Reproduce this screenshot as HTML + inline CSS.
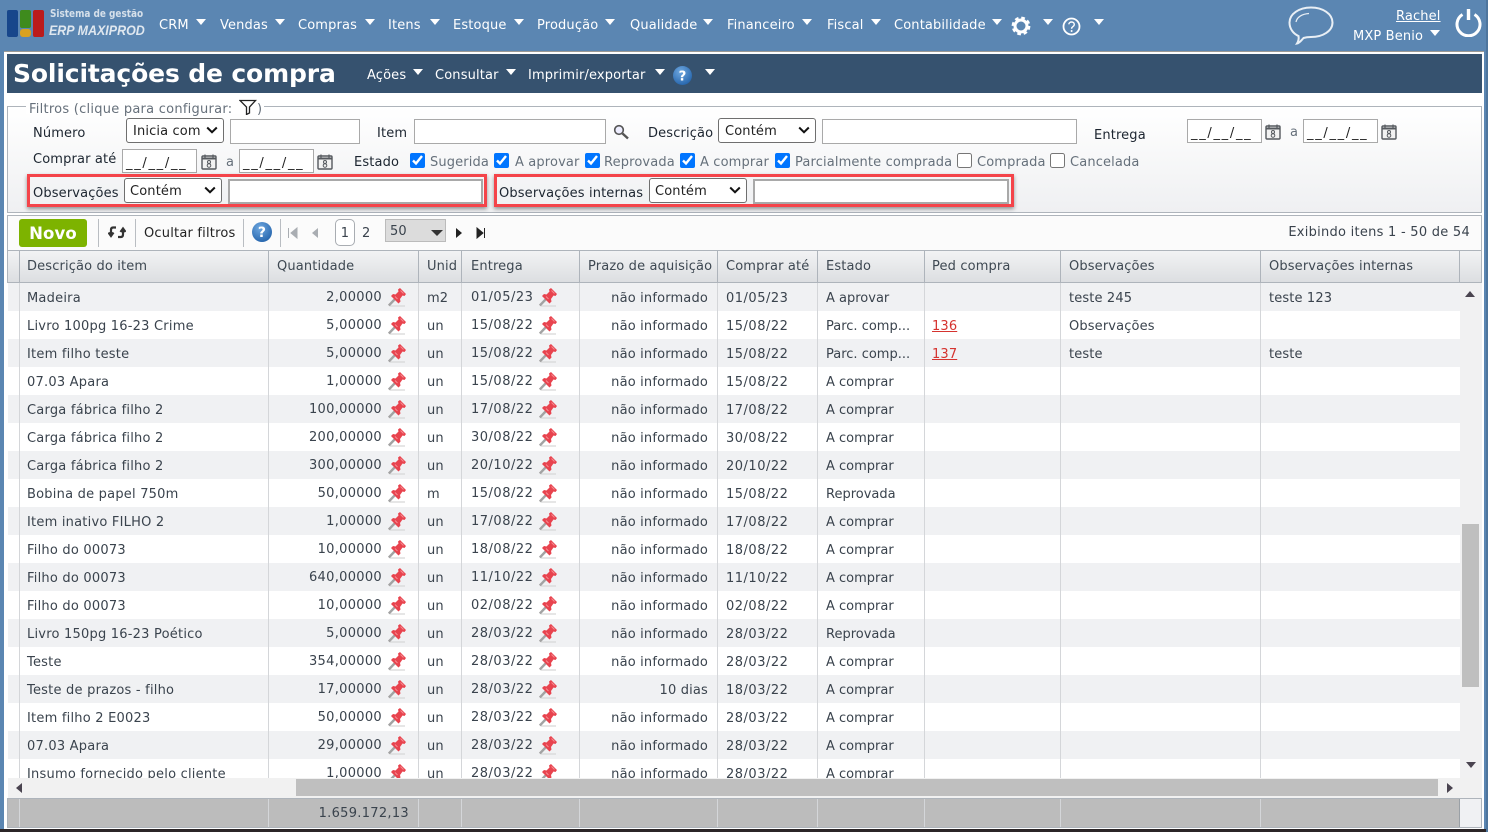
<!DOCTYPE html>
<html lang="pt"><head><meta charset="utf-8"><title>Solicitações de compra</title>
<style>
*{box-sizing:border-box}
html,body{margin:0;padding:0}
body{width:1488px;height:832px;position:relative;overflow:hidden;background:#5b86b2;font:13px/16px "DejaVu Sans","Liberation Sans",sans-serif;letter-spacing:.14px;color:#3a434d}
.a,.t{position:absolute}
.t{white-space:nowrap;margin-top:2px}
.m{color:#fff;top:16px}
.c{position:absolute;width:0;height:0;border-left:5.5px solid transparent;border-right:5.5px solid transparent;border-top:6px solid #fff}
.l{color:#1c2530}
.g{color:#66707b}
.i{position:absolute;background:#fff;border:1px solid #a9a9a9}
.s{position:absolute;background:#fff;border:1px solid #6f6f6f;border-radius:3px;color:#222;padding:5px 0 0 6px;height:25px;width:98px}
.s svg{position:absolute;right:5px;top:7px}
.d{position:absolute;background:#fff;border:1px solid #a9a9a9;width:75px;height:24px;color:#222;padding:6px 0 0 3px;font-size:13px;letter-spacing:1.7px}
.k{position:absolute;margin:0;width:15px;height:15px;top:153px}
.r{position:absolute;left:0;width:1452px;height:28px;line-height:28px}
.r:nth-child(odd){background:#f0f1f3}
.r:nth-child(even){background:#fff}
.r span{position:absolute;white-space:nowrap;top:2px}
.r .q{right:1078px;top:1px;letter-spacing:.3px}
.r .u{left:419px}.r .e{left:463px;top:1px;letter-spacing:.5px}
.r .p{right:752px;letter-spacing:.17px}.r .b{left:718px;letter-spacing:.5px}.r .x{left:818px;letter-spacing:0}.r .o{left:1061px}.r .y{left:1261px}.r .v{left:924px}
.r .n{left:19px;letter-spacing:.22px}
.r svg{position:absolute;top:5px}
.r .f1{left:380px}.r .f2{left:531px}
.r a{color:#d5332f;text-decoration:underline}
.vl{position:absolute;width:1px;background:#d4d6d9}
.hl{position:absolute;width:1px;background:#aeb4bb;top:250px;height:32px}
.h{top:257px;color:#3e4852}
.tb{position:absolute;width:1px;background:#b9bdc2;top:219px;height:28px}
</style></head>
<body>
<svg width="0" height="0" style="position:absolute"><defs>
<radialGradient id="hb" cx=".4" cy=".3" r=".8"><stop offset="0" stop-color="#6fa8e0"/><stop offset="1" stop-color="#1f5fa8"/></radialGradient>
<symbol id="pin" viewBox="0 0 18 19"><path d="M2 18h15" stroke="#d9d9d9" stroke-width="1.600" opacity=".8"/><path d="M0.800 17.500L7.500 10.500" stroke="#a3a3a3" stroke-width="2.400" fill="none"/><path d="M12 0L18 6L16.500 8L14.500 7.500L12 11L12.500 13.500L10.500 15.500L3 8L5 6L7.500 6.500L10.500 3.500L10 1.500Z" fill="#e8434e"/><path d="M12.500 2.500L15.500 5.500M7 8.500l2.500 2.500" stroke="#f58b92" stroke-width="1"/></symbol>
<symbol id="cal" viewBox="0 0 16 16"><rect x="1" y="2" width="14" height="13" rx="1" fill="#f2f2f2" stroke="#55595e" stroke-width="1.400"/><path d="M1 4.500h14" stroke="#55595e" stroke-width="2"/><path d="M4 0.500v3M12 0.500v3" stroke="#55595e" stroke-width="1.200"/><circle cx="8" cy="8" r="1.500" fill="none" stroke="#55595e"/><circle cx="8" cy="11.500" r="1.800" fill="none" stroke="#55595e"/></symbol>
<symbol id="chev" viewBox="0 0 12 8"><path d="M1.200 1.500L6 6.200 10.800 1.500" fill="none" stroke="#111" stroke-width="2"/></symbol>
</defs></svg>

<!-- logo -->
<div class="a" style="left:7px;top:10px;width:11px;height:27px;background:#1b4f9b radial-gradient(#0b2a5c 40%,transparent 45%) 0 10px/2px 2px;border-radius:2px"></div>
<div class="a" style="left:20px;top:10px;width:11px;height:18px;background:#3e8b1d;border-radius:2px"></div>
<div class="a" style="left:20px;top:29px;width:11px;height:8px;background:#d9a11f;border-radius:3px"></div>
<div class="a" style="left:33px;top:10px;width:11px;height:27px;background:#b11414 radial-gradient(#d93030 40%,transparent 45%) 0 0/2px 2px;border-radius:2px"></div>
<div class="t" style="left:50px;top:6px;font:bold 10.200px/14px 'DejaVu Sans',sans-serif;letter-spacing:0;color:#d6e0ea;transform:scaleX(.875);transform-origin:0 0">Sistema de gestão</div>
<div class="t" style="left:49px;top:20px;font:italic bold 14px/17px 'Liberation Sans',sans-serif;letter-spacing:0;color:#dfe7ef;transform:scaleX(.89);transform-origin:0 0">ERP MAXIPROD</div>

<!-- menu -->
<div class="t m" style="left:159px">CRM</div><i class="c" style="left:196px;top:19px"></i>
<div class="t m" style="left:220px">Vendas</div><i class="c" style="left:275px;top:19px"></i>
<div class="t m" style="left:298px">Compras</div><i class="c" style="left:365px;top:19px"></i>
<div class="t m" style="left:388px">Itens</div><i class="c" style="left:430px;top:19px"></i>
<div class="t m" style="left:453px">Estoque</div><i class="c" style="left:514px;top:19px"></i>
<div class="t m" style="left:537px">Produção</div><i class="c" style="left:605px;top:19px"></i>
<div class="t m" style="left:630px">Qualidade</div><i class="c" style="left:703px;top:19px"></i>
<div class="t m" style="left:727px">Financeiro</div><i class="c" style="left:802px;top:19px"></i>
<div class="t m" style="left:827px">Fiscal</div><i class="c" style="left:871px;top:19px"></i>
<div class="t m" style="left:894px">Contabilidade</div><i class="c" style="left:992px;top:19px"></i>
<svg class="a" style="left:1011px;top:16px" width="20" height="20" viewBox="0 0 20 20"><circle cx="10" cy="10" r="7.600" fill="none" stroke="#fff" stroke-width="3.600" stroke-dasharray="3.400 2.570"/><circle cx="10" cy="10" r="6" fill="none" stroke="#fff" stroke-width="3"/></svg>
<i class="c" style="left:1043px;top:19px"></i>
<svg class="a" style="left:1062px;top:17px" width="19" height="19" viewBox="0 0 19 19"><circle cx="9.500" cy="9.500" r="8" fill="none" stroke="#fff" stroke-width="1.800"/><path d="M6.800 7.300c.3-3.200 5.600-3 5.500.2 0 2.200-2.700 2-2.700 4.200" fill="none" stroke="#fff" stroke-width="1.400"/><circle cx="9.600" cy="14" r="1" fill="#fff"/></svg>
<i class="c" style="left:1094px;top:19px"></i>
<svg class="a" style="left:1287px;top:5px" width="48" height="42" viewBox="0 0 48 42"><path d="M24 2.500C36 2.500 45.500 9 45.500 17.500S36 32 24 32c-3 0-5 .2-7.500 1-2.300 2.500-4 5-6.500 5.500 1.500-2.500 2-5 1.500-7.500C6 28.500 2.500 23.500 2.500 17.500 2.500 9 12 2.500 24 2.500z" fill="none" stroke="#e9eff5" stroke-width="2"/><path d="M9 17c1-5 6-8 13-8.500" fill="none" stroke="#e9eff5" stroke-width="1.200"/></svg>
<div class="t" style="left:1396px;top:7px;color:#fff;text-decoration:underline">Rachel</div>
<div class="t" style="left:1353px;top:27px;color:#fff">MXP Benio</div><i class="c" style="left:1430px;top:30px"></i>
<svg class="a" style="left:1454px;top:7px" width="29" height="30" viewBox="0 0 29 30"><path d="M8.500 7.500a11.500 11.500 0 1 0 12 0" fill="none" stroke="#fff" stroke-width="3"/><path d="M14.500 2v11" stroke="#fff" stroke-width="3.400"/></svg>

<!-- page -->
<div class="a" style="left:4px;top:51px;width:1480px;height:778px;background:#fff;border-top:1px solid #9c9a96"></div>
<div class="a" style="left:0;top:829px;width:1488px;height:3px;background:#2b2527"></div>
<div class="a" style="left:1486px;top:0;width:2px;height:832px;background:#4e759d"></div>

<!-- title -->
<div class="a" style="left:7px;top:54px;width:1475px;height:39px;background:#36526f"></div>
<div class="t" style="left:13px;top:55px;font:bold 25px/34px 'DejaVu Sans',sans-serif;letter-spacing:-.14px;color:#fff">Solicitações de compra</div>
<div class="t m" style="left:367px;top:66px">Ações</div><i class="c" style="left:413px;top:69px"></i>
<div class="t m" style="left:435px;top:66px">Consultar</div><i class="c" style="left:506px;top:69px"></i>
<div class="t m" style="left:528px;top:66px">Imprimir/exportar</div><i class="c" style="left:655px;top:69px"></i>
<svg class="a" style="left:673px;top:66px" width="19" height="19" viewBox="0 0 20 20"><circle cx="10" cy="10" r="10" fill="url(#hb)"/><text x="10" y="15" text-anchor="middle" font-family="DejaVu Sans" font-weight="bold" font-size="14" fill="#fff">?</text></svg>
<i class="c" style="left:705px;top:69px"></i>

<!-- filters -->
<div class="a" style="left:7px;top:106px;width:1475px;height:107px;border:1px solid #aeb4bb;background:linear-gradient(#fff,#eff0f2)"></div>
<div class="a" style="left:26px;top:100px;width:238px;height:14px;background:#fff"></div>
<div class="t g" style="left:29px;top:100px;letter-spacing:.25px">Filtros (clique para configurar:</div>
<svg class="a" style="left:239px;top:99px" width="18" height="16" viewBox="0 0 18 16"><path d="M1 1.500h15.500L10.500 8v6L7.500 15.500V8z" fill="none" stroke="#222" stroke-width="1.300"/></svg>
<div class="t g" style="left:257px;top:100px">)</div>

<div class="t l" style="left:33px;top:124px">Número</div>
<div class="s" style="left:126px;top:118px">Inicia com<svg width="12" height="8"><use href="#chev"/></svg></div>
<div class="i" style="left:230px;top:119px;width:130px;height:25px"></div>
<div class="t l" style="left:377px;top:124px">Item</div>
<div class="i" style="left:414px;top:119px;width:192px;height:25px"></div>
<svg class="a" style="left:613px;top:124px" width="16" height="16" viewBox="0 0 16 16"><circle cx="6" cy="6" r="4.300" fill="#eef" stroke="#555" stroke-width="1.600"/><path d="M9.500 9.500L15 14.500" stroke="#555" stroke-width="2.400"/></svg>
<div class="t l" style="left:648px;top:124px">Descrição</div>
<div class="s" style="left:718px;top:118px">Contém<svg width="12" height="8"><use href="#chev"/></svg></div>
<div class="i" style="left:822px;top:119px;width:255px;height:25px"></div>
<div class="t l" style="left:1094px;top:126px">Entrega</div>
<div class="d" style="left:1187px;top:119px">__/__/__</div>
<svg class="a" style="left:1265px;top:124px" width="16" height="16"><use href="#cal"/></svg>
<div class="t g" style="left:1290px;top:123px">a</div>
<div class="d" style="left:1303px;top:119px">__/__/__</div>
<svg class="a" style="left:1381px;top:124px" width="16" height="16"><use href="#cal"/></svg>

<div class="t l" style="left:33px;top:150px">Comprar até</div>
<div class="d" style="left:122px;top:149px">__/__/__</div>
<svg class="a" style="left:201px;top:154px" width="16" height="16"><use href="#cal"/></svg>
<div class="t g" style="left:226px;top:153px">a</div>
<div class="d" style="left:239px;top:149px">__/__/__</div>
<svg class="a" style="left:317px;top:154px" width="16" height="16"><use href="#cal"/></svg>
<div class="t l" style="left:354px;top:153px">Estado</div>
<input class="k" type="checkbox" checked style="left:410px"><div class="t g" style="left:430px;top:153px">Sugerida</div>
<input class="k" type="checkbox" checked style="left:494px"><div class="t g" style="left:515px;top:153px">A aprovar</div>
<input class="k" type="checkbox" checked style="left:585px"><div class="t g" style="left:604px;top:153px">Reprovada</div>
<input class="k" type="checkbox" checked style="left:680px"><div class="t g" style="left:700px;top:153px">A comprar</div>
<input class="k" type="checkbox" checked style="left:775px"><div class="t g" style="left:795px;top:153px">Parcialmente comprada</div>
<input class="k" type="checkbox" style="left:957px"><div class="t g" style="left:977px;top:153px">Comprada</div>
<input class="k" type="checkbox" style="left:1050px"><div class="t g" style="left:1070px;top:153px">Cancelada</div>

<div class="a" style="left:27px;top:174px;width:460px;height:33px;border:3px solid #f4444a;box-shadow:0 2px 4px rgba(0,0,0,.4)"></div>
<div class="t l" style="left:33px;top:184px">Observações</div>
<div class="s" style="left:124px;top:178px;padding-left:5px">Contém<svg width="12" height="8"><use href="#chev"/></svg></div>
<div class="i" style="left:228px;top:179px;width:255px;height:25px;border-width:2px"></div>
<div class="a" style="left:494px;top:174px;width:520px;height:33px;border:3px solid #f4444a;box-shadow:0 2px 4px rgba(0,0,0,.4)"></div>
<div class="t l" style="left:499px;top:184px">Observações internas</div>
<div class="s" style="left:649px;top:178px;padding-left:5px">Contém<svg width="12" height="8"><use href="#chev"/></svg></div>
<div class="i" style="left:753px;top:179px;width:256px;height:25px;border-width:2px"></div>

<!-- toolbar -->
<div class="a" style="left:7px;top:215px;width:1475px;height:35px;border:1px solid #aeb4bb;border-bottom:0;background:#fbfbfb"></div>
<div class="a" style="left:19px;top:219px;width:68px;height:28px;background:#7db300;border-radius:3px;color:#fff;font:bold 16.500px/29px 'DejaVu Sans',sans-serif;text-align:center">Novo</div>
<div class="tb" style="left:98px"></div><div class="tb" style="left:135px"></div><div class="tb" style="left:243px"></div><div class="tb" style="left:280px"></div>
<svg class="a" style="left:108px;top:225px" width="18" height="15" viewBox="0 0 18 15"><path d="M8 2.500H5Q3 2.500 3 5v4.500M0.500 7.500L3 11l2.500-3.500M10 12h3q2 0 2-2.500V5M12.500 7l2.500-3.500L17.500 7" fill="none" stroke="#333" stroke-width="2.200"/></svg>
<div class="t" style="left:144px;top:224px;color:#222;letter-spacing:.2px">Ocultar filtros</div>
<svg class="a" style="left:252px;top:222px" width="20" height="20" viewBox="0 0 20 20"><circle cx="10" cy="10" r="10" fill="url(#hb)"/><text x="10" y="15" text-anchor="middle" font-family="DejaVu Sans" font-weight="bold" font-size="14" fill="#fff">?</text></svg>
<svg class="a" style="left:287px;top:227px" width="32" height="12"><path d="M1.500 1v10M10 1v10L4 6z" fill="#a9adb2" stroke="#a9adb2"/><path d="M31 1v10l-6-5z" fill="#a9adb2"/></svg>
<div class="a" style="left:335px;top:219px;width:20px;height:27px;background:#fff;border:1px solid #a9adb2;border-radius:5px;text-align:center;line-height:27px">1</div>
<div class="t" style="left:362px;top:224px">2</div>
<div class="a" style="left:385px;top:219px;width:61px;height:23px;background:#dcdcdc;border:1px solid #bbb;padding:4px 0 0 4px">50</div>
<i class="c" style="left:431px;top:230px;border-top-color:#333;border-left-width:6px;border-right-width:6px"></i>
<svg class="a" style="left:455px;top:227px" width="32" height="12"><path d="M1 1v10l6-5z" fill="#222"/><path d="M22 1v10l6-5zM29.500 1v10" fill="#222" stroke="#222"/></svg>
<div class="t" style="right:18px;top:223px;letter-spacing:.26px">Exibindo itens 1 - 50 de 54</div>

<!-- header -->
<div class="a" style="left:7px;top:250px;width:1475px;height:33px;background:linear-gradient(#f2f3f4,#dcdee1);border:1px solid #aeb4bb;border-width:1px 1px 1px 1px"></div>
<div class="hl" style="left:19px"></div><div class="hl" style="left:268px"></div><div class="hl" style="left:418px"></div><div class="hl" style="left:461px"></div><div class="hl" style="left:579px"></div><div class="hl" style="left:717px"></div><div class="hl" style="left:817px"></div><div class="hl" style="left:924px"></div><div class="hl" style="left:1060px"></div><div class="hl" style="left:1260px"></div><div class="hl" style="left:1459px"></div>
<div class="t h" style="left:27px">Descrição do item</div>
<div class="t h" style="left:277px">Quantidade</div>
<div class="t h" style="left:427px">Unid</div>
<div class="t h" style="left:471px">Entrega</div>
<div class="t h" style="left:588px">Prazo de aquisição</div>
<div class="t h" style="left:726px">Comprar até</div>
<div class="t h" style="left:826px">Estado</div>
<div class="t h" style="left:932px">Ped compra</div>
<div class="t h" style="left:1069px">Observações</div>
<div class="t h" style="left:1269px">Observações internas</div>

<!-- rows -->
<div class="a" style="left:8px;top:283px;width:1474px;height:495px;overflow:hidden;background:#f1f1f2">
<div style="position:absolute;left:0;top:0;width:1452px;height:504px">
<div class="r" style="top:0"><span class="n">Madeira</span><span class="q">2,00000</span><svg class="f1" width="18" height="19"><use href="#pin"/></svg><span class="u">m2</span><span class="e">01/05/23</span><svg class="f2" width="18" height="19"><use href="#pin"/></svg><span class="p">não informado</span><span class="b">01/05/23</span><span class="x">A aprovar</span><span class="o">teste 245</span><span class="y">teste 123</span></div>
<div class="r" style="top:28px"><span class="n">Livro 100pg 16-23 Crime</span><span class="q">5,00000</span><svg class="f1" width="18" height="19"><use href="#pin"/></svg><span class="u">un</span><span class="e">15/08/22</span><svg class="f2" width="18" height="19"><use href="#pin"/></svg><span class="p">não informado</span><span class="b">15/08/22</span><span class="x">Parc. comp...</span><span class="v"><a>136</a></span><span class="o">Observações</span></div>
<div class="r" style="top:56px"><span class="n">Item filho teste</span><span class="q">5,00000</span><svg class="f1" width="18" height="19"><use href="#pin"/></svg><span class="u">un</span><span class="e">15/08/22</span><svg class="f2" width="18" height="19"><use href="#pin"/></svg><span class="p">não informado</span><span class="b">15/08/22</span><span class="x">Parc. comp...</span><span class="v"><a>137</a></span><span class="o">teste</span><span class="y">teste</span></div>
<div class="r" style="top:84px"><span class="n">07.03 Apara</span><span class="q">1,00000</span><svg class="f1" width="18" height="19"><use href="#pin"/></svg><span class="u">un</span><span class="e">15/08/22</span><svg class="f2" width="18" height="19"><use href="#pin"/></svg><span class="p">não informado</span><span class="b">15/08/22</span><span class="x">A comprar</span></div>
<div class="r" style="top:112px"><span class="n">Carga fábrica filho 2</span><span class="q">100,00000</span><svg class="f1" width="18" height="19"><use href="#pin"/></svg><span class="u">un</span><span class="e">17/08/22</span><svg class="f2" width="18" height="19"><use href="#pin"/></svg><span class="p">não informado</span><span class="b">17/08/22</span><span class="x">A comprar</span></div>
<div class="r" style="top:140px"><span class="n">Carga fábrica filho 2</span><span class="q">200,00000</span><svg class="f1" width="18" height="19"><use href="#pin"/></svg><span class="u">un</span><span class="e">30/08/22</span><svg class="f2" width="18" height="19"><use href="#pin"/></svg><span class="p">não informado</span><span class="b">30/08/22</span><span class="x">A comprar</span></div>
<div class="r" style="top:168px"><span class="n">Carga fábrica filho 2</span><span class="q">300,00000</span><svg class="f1" width="18" height="19"><use href="#pin"/></svg><span class="u">un</span><span class="e">20/10/22</span><svg class="f2" width="18" height="19"><use href="#pin"/></svg><span class="p">não informado</span><span class="b">20/10/22</span><span class="x">A comprar</span></div>
<div class="r" style="top:196px"><span class="n">Bobina de papel 750m</span><span class="q">50,00000</span><svg class="f1" width="18" height="19"><use href="#pin"/></svg><span class="u">m</span><span class="e">15/08/22</span><svg class="f2" width="18" height="19"><use href="#pin"/></svg><span class="p">não informado</span><span class="b">15/08/22</span><span class="x">Reprovada</span></div>
<div class="r" style="top:224px"><span class="n">Item inativo FILHO 2</span><span class="q">1,00000</span><svg class="f1" width="18" height="19"><use href="#pin"/></svg><span class="u">un</span><span class="e">17/08/22</span><svg class="f2" width="18" height="19"><use href="#pin"/></svg><span class="p">não informado</span><span class="b">17/08/22</span><span class="x">A comprar</span></div>
<div class="r" style="top:252px"><span class="n">Filho do 00073</span><span class="q">10,00000</span><svg class="f1" width="18" height="19"><use href="#pin"/></svg><span class="u">un</span><span class="e">18/08/22</span><svg class="f2" width="18" height="19"><use href="#pin"/></svg><span class="p">não informado</span><span class="b">18/08/22</span><span class="x">A comprar</span></div>
<div class="r" style="top:280px"><span class="n">Filho do 00073</span><span class="q">640,00000</span><svg class="f1" width="18" height="19"><use href="#pin"/></svg><span class="u">un</span><span class="e">11/10/22</span><svg class="f2" width="18" height="19"><use href="#pin"/></svg><span class="p">não informado</span><span class="b">11/10/22</span><span class="x">A comprar</span></div>
<div class="r" style="top:308px"><span class="n">Filho do 00073</span><span class="q">10,00000</span><svg class="f1" width="18" height="19"><use href="#pin"/></svg><span class="u">un</span><span class="e">02/08/22</span><svg class="f2" width="18" height="19"><use href="#pin"/></svg><span class="p">não informado</span><span class="b">02/08/22</span><span class="x">A comprar</span></div>
<div class="r" style="top:336px"><span class="n">Livro 150pg 16-23 Poético</span><span class="q">5,00000</span><svg class="f1" width="18" height="19"><use href="#pin"/></svg><span class="u">un</span><span class="e">28/03/22</span><svg class="f2" width="18" height="19"><use href="#pin"/></svg><span class="p">não informado</span><span class="b">28/03/22</span><span class="x">Reprovada</span></div>
<div class="r" style="top:364px"><span class="n">Teste</span><span class="q">354,00000</span><svg class="f1" width="18" height="19"><use href="#pin"/></svg><span class="u">un</span><span class="e">28/03/22</span><svg class="f2" width="18" height="19"><use href="#pin"/></svg><span class="p">não informado</span><span class="b">28/03/22</span><span class="x">A comprar</span></div>
<div class="r" style="top:392px"><span class="n">Teste de prazos - filho</span><span class="q">17,00000</span><svg class="f1" width="18" height="19"><use href="#pin"/></svg><span class="u">un</span><span class="e">28/03/22</span><svg class="f2" width="18" height="19"><use href="#pin"/></svg><span class="p">10 dias</span><span class="b">18/03/22</span><span class="x">A comprar</span></div>
<div class="r" style="top:420px"><span class="n">Item filho 2 E0023</span><span class="q">50,00000</span><svg class="f1" width="18" height="19"><use href="#pin"/></svg><span class="u">un</span><span class="e">28/03/22</span><svg class="f2" width="18" height="19"><use href="#pin"/></svg><span class="p">não informado</span><span class="b">28/03/22</span><span class="x">A comprar</span></div>
<div class="r" style="top:448px"><span class="n">07.03 Apara</span><span class="q">29,00000</span><svg class="f1" width="18" height="19"><use href="#pin"/></svg><span class="u">un</span><span class="e">28/03/22</span><svg class="f2" width="18" height="19"><use href="#pin"/></svg><span class="p">não informado</span><span class="b">28/03/22</span><span class="x">A comprar</span></div>
<div class="r" style="top:476px"><span class="n">Insumo fornecido pelo cliente</span><span class="q">1,00000</span><svg class="f1" width="18" height="19"><use href="#pin"/></svg><span class="u">un</span><span class="e">28/03/22</span><svg class="f2" width="18" height="19"><use href="#pin"/></svg><span class="p">não informado</span><span class="b">28/03/22</span><span class="x">A comprar</span></div>
</div>
<div class="vl" style="left:11px;top:0;height:495px"></div><div class="vl" style="left:260px;top:0;height:495px"></div><div class="vl" style="left:410px;top:0;height:495px"></div><div class="vl" style="left:453px;top:0;height:495px"></div><div class="vl" style="left:571px;top:0;height:495px"></div><div class="vl" style="left:709px;top:0;height:495px"></div><div class="vl" style="left:809px;top:0;height:495px"></div><div class="vl" style="left:916px;top:0;height:495px"></div><div class="vl" style="left:1052px;top:0;height:495px"></div><div class="vl" style="left:1252px;top:0;height:495px"></div>
</div>

<!-- scrollbars -->
<div class="a" style="left:1462px;top:524px;width:17px;height:163px;background:#bfbfbf"></div>
<div class="a" style="left:1465px;top:291px;border-left:5px solid transparent;border-right:5px solid transparent;border-bottom:6px solid #4a4450"></div>
<div class="a" style="left:1466px;top:762px;border-left:5px solid transparent;border-right:5px solid transparent;border-top:6px solid #4a4450"></div>
<div class="a" style="left:8px;top:778px;width:1474px;height:20px;background:#f1f1f1"></div>
<div class="a" style="left:296px;top:779px;width:1142px;height:17px;background:#bfbfbf"></div>
<div class="a" style="left:16px;top:783px;border-top:5px solid transparent;border-bottom:5px solid transparent;border-right:6px solid #4a4450"></div>
<div class="a" style="left:1447px;top:783px;border-top:5px solid transparent;border-bottom:5px solid transparent;border-left:6px solid #4a4450"></div>

<!-- footer -->
<div class="a" style="left:7px;top:798px;width:1475px;height:30px;background:#f0f1f3;border:1px solid #aeb4bb"></div>
<div class="a" style="left:8px;top:799px;width:1452px;height:28px;background:#bcbcbc;border-right:1px solid #9aa0a6"></div>
<div class="vl" style="left:19px;top:799px;height:28px"></div><div class="vl" style="left:268px;top:799px;height:28px"></div><div class="vl" style="left:418px;top:799px;height:28px"></div><div class="vl" style="left:461px;top:799px;height:28px"></div><div class="vl" style="left:579px;top:799px;height:28px"></div><div class="vl" style="left:717px;top:799px;height:28px"></div><div class="vl" style="left:817px;top:799px;height:28px"></div><div class="vl" style="left:924px;top:799px;height:28px"></div><div class="vl" style="left:1060px;top:799px;height:28px"></div><div class="vl" style="left:1260px;top:799px;height:28px"></div>
<div class="t" style="right:1079px;top:804px;letter-spacing:.3px">1.659.172,13</div>
</body></html>
